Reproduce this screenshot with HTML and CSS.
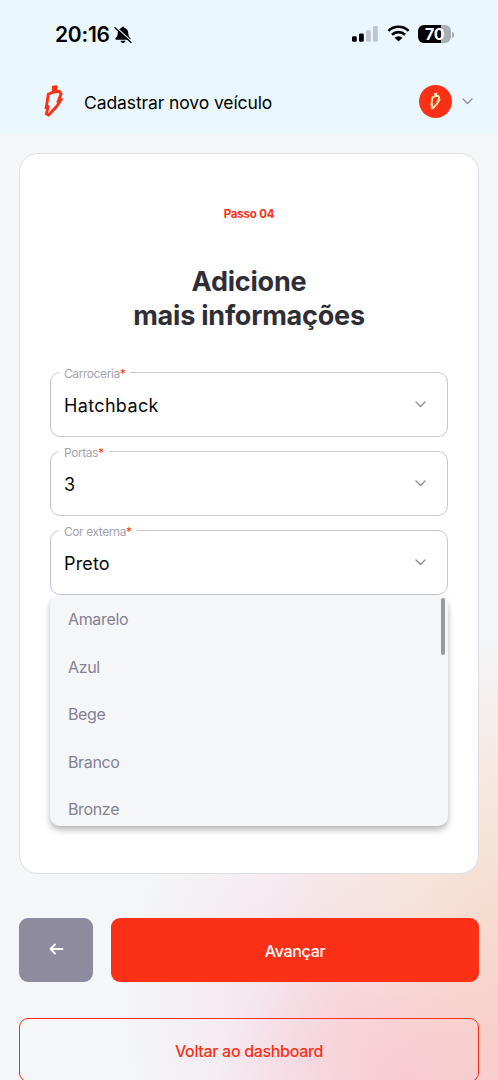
FILE: index.html
```html
<!DOCTYPE html>
<html lang="pt-BR">
<head>
<meta charset="utf-8">
<meta name="viewport" content="width=device-width">
<title>Cadastrar novo veículo</title>
<link rel="stylesheet" href="styles.css">
</head>
<body>
<div class="screen">
  <header class="top">
    <div class="status">
      <span class="time">20:16</span>
      <svg class="bell" width="18" height="18" viewBox="0 0 18 18"><path d="M9 .8c.9 0 1.4.5 1.6 1.3 2.5.8 3.6 2.8 3.7 5.3.1 2.3.8 3.5 2.1 4.7.5.5.2 1.6-.6 1.6H2.200c-.8 0-1.100-1.100-.6-1.600 1.300-1.200 2-2.400 2.100-4.700.1-2.500 1.200-4.500 3.700-5.300C7.600 1.300 8.100.8 9 .8zM6.500 14.700h5c-.2 1.400-1.200 2.200-2.500 2.200s-2.300-.8-2.500-2.200z" fill="#000"/><path d="M1.800 1 17.500 15.300" stroke="#ebf7fe" stroke-width="1.300"/><path d="M1 1.800 17 16.400" stroke="#000" stroke-width="1.400" stroke-linecap="round"/></svg>
      <svg class="signal" width="26" height="16" viewBox="0 0 26 16"><rect x="0" y="10.300" width="4.800" height="5.400" rx="1.300"/><rect x="7" y="7.600" width="4.800" height="8.100" rx="1.300"/><g fill="#bec6cc"><rect x="14" y="4.200" width="4.800" height="11.500" rx="1.300"/><rect x="21" y="0" width="4.800" height="15.700" rx="1.300"/></g></svg>
      <svg class="wifi" width="23" height="17" viewBox="0 0 23 17"><g fill="none" stroke="#000" stroke-width="2.600"><path d="M1.400 5.900a14.500 14.500 0 0 1 20.200 0"/><path d="M5 9.800a9.300 9.300 0 0 1 13 0"/></g><path d="M11.500 16.500 7.600 12.700a5.700 5.700 0 0 1 7.800 0z"/></svg>
      <div class="battery"><span>70</span></div>
      <i class="cap"></i>
    </div>
    <div class="nav">
      <svg class="logo" width="20" height="34" viewBox="0 0 20 34"><path d="M4.300 10.300 8.400 8.300 15.300 7.300 17.100 10 14.500 16.700 16.700 16.300 12.600 22.500 4.600 31 2.500 29.900 3.900 23 2.300 23.300Z" fill="none" stroke="#fc3017" stroke-width="2.900"/><path d="M8 1.800 13.400 1.200 13 8 7.900 8.800Z" fill="#fc3017"/></svg>
      <h1>Cadastrar novo veículo</h1>
      <div class="avatar"><svg width="11" height="18" viewBox="0 0 20 34"><path d="M4.300 10.300 8.400 8.300 15.300 7.300 17.100 10 14.500 16.700 16.700 16.300 12.600 22.500 5 30.500 3 29.900 3.900 23 2.300 23.300Z" fill="none" stroke="#ffedb2" stroke-width="3.400"/><path d="M7.500 1.800 13.400 1.200 13 8 7.900 8.800Z" fill="#ffedb2"/></svg></div>
      <svg class="chev" width="11" height="7" viewBox="0 0 11 7"><path d="M1 1l4.500 4.500L10 1"/></svg>
    </div>
  </header>
  <main>
    <section class="card">
      <p class="step">Passo 04</p>
      <h2>Adicione<br>mais informações</h2>
      <div class="field"><label>Carroceria<b>*</b></label><span class="value wide">Hatchback</span><svg class="chev" width="11" height="7" viewBox="0 0 11 7"><path d="M1 1l4.500 4.500L10 1"/></svg></div>
      <div class="field"><label>Portas<b>*</b></label><span class="value">3</span><svg class="chev" width="11" height="7" viewBox="0 0 11 7"><path d="M1 1l4.500 4.500L10 1"/></svg></div>
      <div class="field"><label>Cor externa<b>*</b></label><span class="value">Preto</span><svg class="chev" width="11" height="7" viewBox="0 0 11 7"><path d="M1 1l4.500 4.500L10 1"/></svg></div>
      <ul class="options"><li>Amarelo</li><li>Azul</li><li>Bege</li><li>Branco</li><li>Bronze</li></ul>
    </section>
    <div class="actions">
      <button class="back" aria-label="Voltar"><svg width="15" height="12" viewBox="0 0 15 12"><path d="M13.500 6H1.500M6 1.500 1.500 6 6 10.500"/></svg></button>
      <button class="next">Avançar</button>
    </div>
    <button class="dash">Voltar ao dashboard</button>
  </main>
</div>
</body>
</html>
```
FILE: styles.css
```css
* { box-sizing: border-box; }
body { margin: 0; font-family: Inter, "Liberation Sans", sans-serif; }
.screen {
  height: 1080px; overflow: hidden;
  background:
    radial-gradient(ellipse 190px 150px at 405px 1080px, rgba(249,194,204,.7), rgba(249,196,206,0)),
    radial-gradient(ellipse 170px 220px at 530px 1060px, rgba(247,204,192,.75), rgba(247,204,192,0)),
    radial-gradient(ellipse 270px 300px at 540px 930px, rgba(246,220,204,.95) 0, rgba(247,224,210,.8) 40%, rgba(246,238,226,0)),
    radial-gradient(ellipse 230px 260px at 350px 1000px, rgba(246,212,226,.8), rgba(245,222,232,.4) 60%, rgba(245,236,242,0)),
    #f4f6f8;
}
.top { height: 134px; background: #ebf7fe; }
.status { height: 68px; padding: 1px 44px 0 55px; display: flex; align-items: center; }
.time { font-size: 21px; font-weight: 600; letter-spacing: -.25px; width: 58px; white-space: nowrap; }
.bell { margin-left: 1px; }
.signal { margin: 0 0 2px auto; }
.wifi { margin: 0 0 2px 9px; }
.battery { width: 33px; height: 18px; margin: 0 0 1px 8px; border-radius: 6px; background: linear-gradient(90deg, #000 70%, #a7afb5 70%); color: #fff; font-weight: 700; font-size: 16px; line-height: 18px; text-align: center; letter-spacing: -.5px; }
.cap { width: 2px; height: 6px; margin-left: 1px; border-radius: 0 2px 2px 0; background: #a7afb5; }
.nav { height: 66px; padding: 0 25px 0 44px; display: flex; align-items: center; }
h1 { margin: 2px 0 0 20px; font-size: 17.500px; font-weight: 400; letter-spacing: -.1px; }
.avatar { width: 33px; height: 33px; margin-left: auto; border-radius: 50%; background: #fc3017; display: grid; place-items: center; }
.chev { fill: none; stroke: #8f8b9f; stroke-width: 1.300; stroke-linecap: round; stroke-linejoin: round; }
.nav .chev { margin-left: 10px; }
main { padding: 19px 19px 0; }
.card { height: 721px; padding: 53px 30px 0; border: 1px solid #dfdfe7; border-radius: 19px; background: #fff; }
.step { margin: 0; text-align: center; color: #fc3017; font-size: 11.500px; line-height: 14px; font-weight: 700; letter-spacing: -.2px; }
h2 { margin: 44px 0 39px; text-align: center; color: #2f2e36; font-size: 27px; line-height: 34px; font-weight: 700; letter-spacing: -.22px; }
.field { position: relative; height: 65px; margin-bottom: 14px; padding: 0 21px 0 13px; border: 1px solid #c8c6d6; border-radius: 10px; display: flex; align-items: center; justify-content: space-between; }
label { position: absolute; left: 8px; top: -7px; padding: 0 5px; background: #fff; color: #a6a2b4; font-size: 12px; line-height: 15px; letter-spacing: -.42px; white-space: nowrap; }
label b { color: #fc3017; font-weight: 400; }
.value { padding-top: 2px; font-size: 18px; color: #080808; letter-spacing: .15px; }
.wide { letter-spacing: .35px; }
.options { position: relative; height: 231px; margin: -14px 0 0; padding: 0 18px; list-style: none; border-radius: 10px; background: #f4f6f8; box-shadow: 0 4px 6px rgba(0,0,0,.28); color: #858194; font-size: 16px; letter-spacing: -.35px; }
.options::after { content: ""; position: absolute; right: 3px; top: 3px; width: 4px; height: 57px; border-radius: 2px; background: #9a9a9c; }
.options li { height: 47.500px; line-height: 48px; }
.actions { margin-top: 44px; display: flex; gap: 18px; }
button { padding: 0; font: 500 16px Inter, sans-serif; border: 0; border-radius: 9px; }
.back { width: 74px; height: 64px; padding-bottom: 2px; background: #8f8b9f; display: grid; place-items: center; }
.back svg { fill: none; stroke: #fff; stroke-width: 1.800; stroke-linecap: round; stroke-linejoin: round; }
.next { flex: 1; background: #fc3017; color: #fff; padding-top: 1px; letter-spacing: -.3px; }
.dash { width: 100%; height: 64px; margin-top: 36px; padding-top: 2px; background: transparent; border: 1px solid #fc3017; color: #fc3017; letter-spacing: -.32px; }
```
